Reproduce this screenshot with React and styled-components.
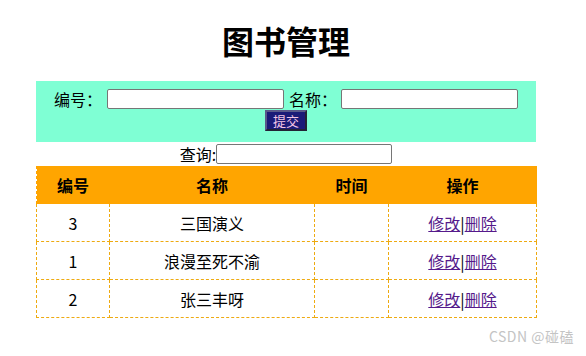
import React from "react";
import styled, { createGlobalStyle } from "styled-components";

const books = [
  { id: 3, name: "三国演义", time: "" },
  { id: 1, name: "浪漫至死不渝", time: "" },
  { id: 2, name: "张三丰呀", time: "" },
];

const App = () => {
  return (
    <Page>
      <GlobalStyle />
      <Wrapper>
        <Title>图书管理</Title>
        <FormBox>
          <FormRow>
            <Label $w={53}>编号：</Label>
            <Input $w={177} />
            <Label $w={52} $ml={5}>名称：</Label>
            <Input $w={177} />
          </FormRow>
          <ButtonRow>
            <Submit>提交</Submit>
          </ButtonRow>
        </FormBox>
        <SearchRow>
          <Label>查询:</Label>
          <Input $w={176} />
        </SearchRow>
        <Table>
          <colgroup>
            <col style={{ width: 73 }} />
            <col style={{ width: 205 }} />
            <col style={{ width: 74 }} />
            <col style={{ width: 148 }} />
          </colgroup>
          <thead>
            <tr>
              <Th>编号</Th>
              <Th>名称</Th>
              <Th>时间</Th>
              <Th>操作</Th>
            </tr>
          </thead>
          <tbody>
            {books.map((b) => (
              <tr key={b.id}>
                <Td>{b.id}</Td>
                <Td>{b.name}</Td>
                <Td>{b.time}</Td>
                <Td>
                  <Link href="#">修改</Link>|<Link href="#">删除</Link>
                </Td>
              </tr>
            ))}
          </tbody>
        </Table>
      </Wrapper>
      <Watermark>CSDN @碰磕</Watermark>
    </Page>
  );
};

export default App;

const GlobalStyle = createGlobalStyle`
  body {
    margin: 0;
    background: #fff;
    font-family: "Microsoft YaHei", "Noto Sans CJK SC", "Noto Sans", sans-serif;
    color: #000;
  }
`;

const Page = styled.div`
  position: relative;
  width: 586px;
  height: 356px;
  overflow: hidden;
`;

const Wrapper = styled.div`
  width: 500px;
  margin-left: 36px;
  display: flex;
  flex-direction: column;
`;

const Title = styled.h1`
  margin: 0;
  padding-top: 20px;
  height: 40px;
  line-height: 40px;
  font-size: 32px;
  font-weight: bold;
  text-align: center;
  margin-bottom: 21px;
`;

const FormBox = styled.div`
  background-color: aquamarine;
  height: 61px;
  box-sizing: border-box;
  padding-top: 7px;
  display: flex;
  flex-direction: column;
  align-items: center;
`;

const FormRow = styled.div`
  display: flex;
  align-items: center;
  height: 21px;
`;

const Label = styled.span`
  display: inline-block;
  width: ${(p) => (p.$w ? p.$w + "px" : "auto")};
  font-size: 16px;
  line-height: 20px;
  white-space: nowrap;
  margin-left: ${(p) => (p.$ml ? p.$ml + "px" : "0")};
`;

const Input = styled.input`
  box-sizing: border-box;
  width: ${(p) => p.$w}px;
  height: 20px;
  margin: 0;
  border: 1px solid #767676;
  border-radius: 2px;
  padding: 0 2px;
  background: #fff;
`;

const ButtonRow = styled.div`
  display: flex;
  justify-content: center;
  margin-top: 1px;
`;

const Submit = styled.button`
  box-sizing: border-box;
  width: 42px;
  height: 21px;
  padding: 0;
  background-color: #1b1b78;
  color: #f4c6e6;
  border: 2px outset #5a5a8a;
  font-family: inherit;
  font-size: 13px;
  line-height: 16px;
`;

const SearchRow = styled.div`
  height: 24px;
  display: flex;
  justify-content: center;
  align-items: center;
`;

const Table = styled.table`
  width: 500px;
  border-collapse: collapse;
  table-layout: fixed;
  font-size: 16px;
`;

const Th = styled.th`
  background-color: orange;
  height: 37px;
  padding: 0;
  font-weight: bold;
  text-align: center;
  border: 1px dashed orange;
  border-top: none;
`;

const Td = styled.td`
  height: 37px;
  padding: 0;
  text-align: center;
  border: 1px dashed #eeaa10;
`;

const Link = styled.a`
  color: #551a8b;
  text-decoration: underline;
`;

const Watermark = styled.div`
  position: absolute;
  right: 12px;
  bottom: 10px;
  font-size: 14px;
  color: #c4c4c4;
  letter-spacing: 0.5px;
`;
